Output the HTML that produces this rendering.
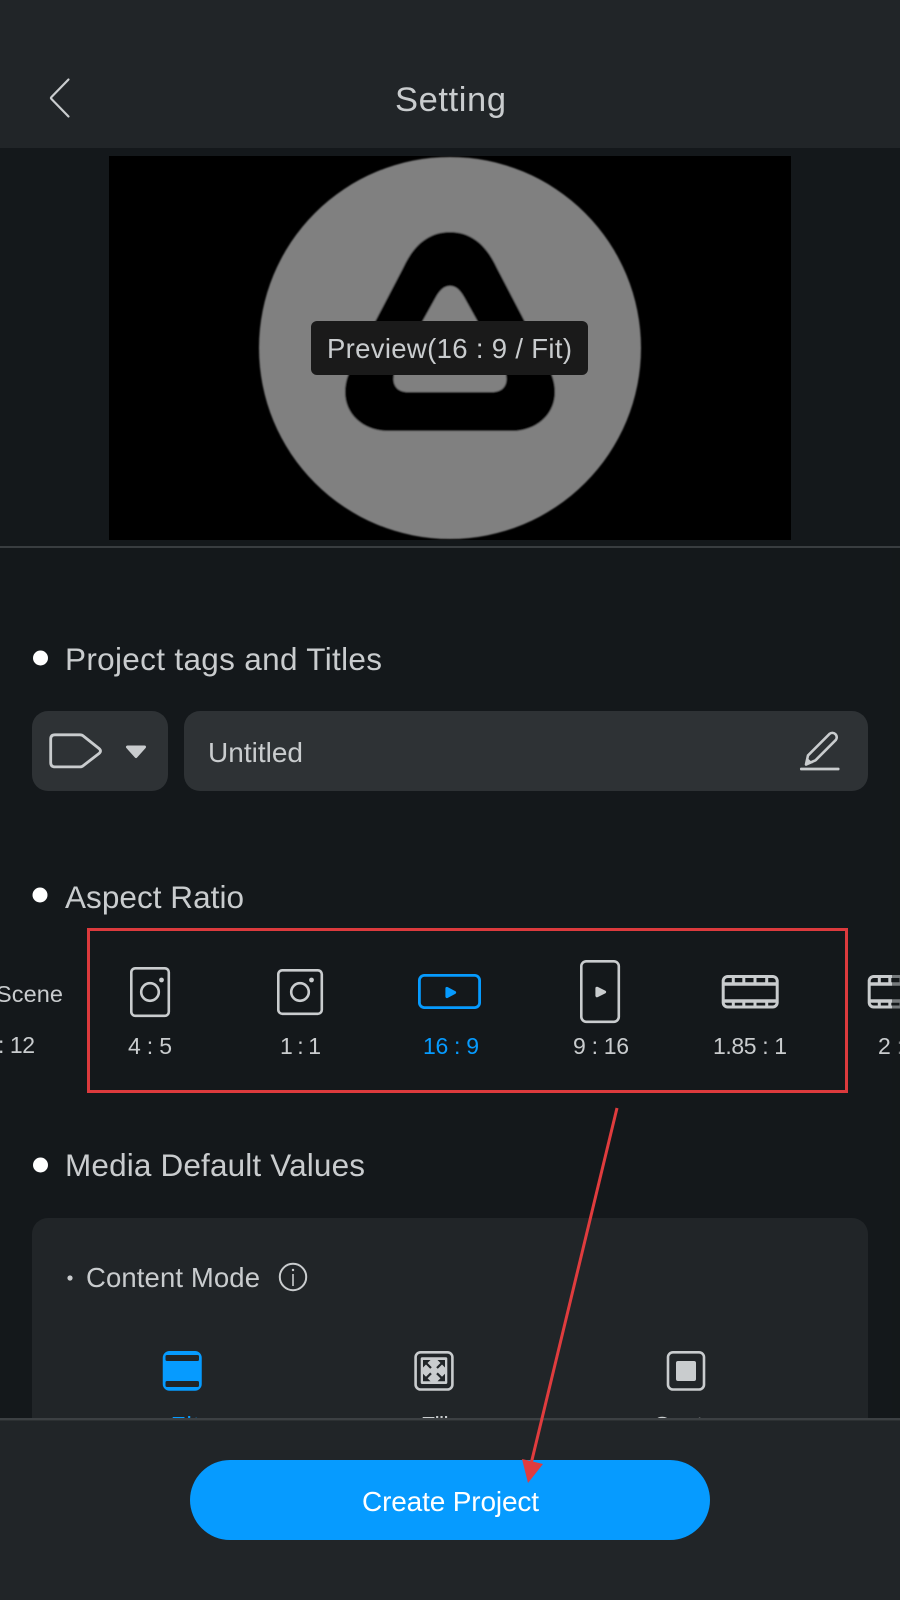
<!DOCTYPE html>
<html lang="en">
<head>
<meta charset="utf-8">
<title>Setting</title>
<style>
html,body{margin:0;padding:0;background:#14181b;width:900px;height:1600px;overflow:hidden}
svg{display:block}
text{font-family:"Liberation Sans",sans-serif;fill:#c9ccce}
</style>
</head>
<body>
<svg width="900" height="1600" viewBox="0 0 900 1600" xmlns="http://www.w3.org/2000/svg">
<defs>
<clipPath id="pv"><rect x="109" y="156" width="682" height="384"/></clipPath>
<filter id="soft" x="-5%" y="-5%" width="110%" height="110%"><feGaussianBlur stdDeviation="0.9"/></filter>
<clipPath id="scroll"><rect x="0" y="0" width="900" height="1418"/></clipPath>
</defs>
<rect width="900" height="1600" fill="#14181b"/>

<!-- header -->
<rect width="900" height="148" fill="#212528"/>
<path d="M68.5 79.5 L51.5 97 Q50.5 98 51.5 99 L68.5 116.5" fill="none" stroke="#c9ccce" stroke-width="2.2" stroke-linecap="round" stroke-linejoin="round"/>
<text x="395" y="111" font-size="34.5" textLength="111">Setting</text>

<!-- preview -->
<rect x="109" y="156" width="682" height="384" fill="#000"/>
<g clip-path="url(#pv)">
<g filter="url(#soft)">
<circle cx="450" cy="348" r="191" fill="#808080"/>
<path fill="#000" fill-rule="evenodd" d="M450 232 C428 232 413 246 403 268 L354 362 C348 374 345 382 345 392 C345 415 364 431 388 431 L512 431 C536 431 555 415 555 392 C555 382 552 374 546 362 L497 268 C487 246 472 232 450 232 Z M450 286 C444 286 440 290 436 297 L396 369 C391 379 393 392 408 392 L492 392 C507 392 509 379 504 369 L464 297 C460 290 456 286 450 286 Z"/>
</g>
</g>
<rect x="311" y="321" width="277" height="54" rx="6" fill="#1a1a1a"/>
<text x="327" y="358" font-size="27.5" textLength="245">Preview(16 : 9 / Fit)</text>
<rect x="0" y="546" width="900" height="2" fill="#393d40"/>

<g clip-path="url(#scroll)">
<!-- project tags -->
<circle cx="40.5" cy="658" r="7.5" fill="#fff"/>
<text x="65" y="670" font-size="31.5" textLength="317">Project tags and Titles</text>
<rect x="32" y="711" width="136" height="80" rx="16" fill="#2e3235"/>
<rect x="184" y="711" width="684" height="80" rx="16" fill="#2e3235"/>
<path d="M55 734.8 H80 Q82 734.8 83.3 736 L99 748.5 Q102 751 99 753.5 L83.3 765.6 Q82 766.9 80 766.9 H55 Q50.7 766.9 50.7 762.5 V739 Q50.7 734.8 55 734.8 Z" fill="none" stroke="#c9ccce" stroke-width="2.8" stroke-linejoin="round"/>
<path d="M127.5 747 H144.5 L136 756.5 Z" fill="#c9ccce" stroke="#c9ccce" stroke-width="3" stroke-linejoin="round"/>
<text x="208" y="762" font-size="28" textLength="95">Untitled</text>
<path d="M806 764.5 L808 755.4 L829.5 733.9 A4.4 4.4 0 0 1 835.7 740.1 L815.5 760.3 Z" fill="none" stroke="#c9ccce" stroke-width="2.6" stroke-linejoin="round"/>
<path d="M806 764.5 L807.2 758.5 L812 762.8 Z" fill="#c9ccce" stroke="#c9ccce" stroke-width="1"/>
<rect x="800" y="767.6" width="39.5" height="2.8" rx="1" fill="#c9ccce"/>

<!-- aspect ratio -->
<circle cx="40" cy="895" r="7.5" fill="#fff"/>
<text x="65" y="908" font-size="31.5" textLength="179">Aspect Ratio</text>

<text x="-4" y="1002" font-size="23.5" textLength="67">Scene</text>
<text x="-2" y="1053" font-size="23" textLength="37">: 12</text>

<!-- 4:5 -->
<rect x="131.3" y="968.3" width="37.5" height="47.5" rx="4" fill="none" stroke="#c9ccce" stroke-width="2.6"/>
<circle cx="150" cy="992" r="8.8" fill="none" stroke="#c9ccce" stroke-width="2.6"/>
<circle cx="161.5" cy="980" r="2.4" fill="#c9ccce"/>
<text x="128" y="1054" font-size="23" textLength="44">4 : 5</text>
<!-- 1:1 -->
<rect x="278.3" y="970.3" width="43.5" height="43.5" rx="4" fill="none" stroke="#c9ccce" stroke-width="2.6"/>
<circle cx="300" cy="992" r="8.8" fill="none" stroke="#c9ccce" stroke-width="2.6"/>
<circle cx="311.5" cy="980" r="2.4" fill="#c9ccce"/>
<text x="280" y="1054" font-size="23" textLength="41">1 : 1</text>
<!-- 16:9 -->
<rect x="419.4" y="975.4" width="60.2" height="32.2" rx="5" fill="none" stroke="#069bff" stroke-width="2.8"/>
<path d="M447 988.5 L454.5 992.5 L447 996.5 Z" fill="#069bff" stroke="#069bff" stroke-width="3.2" stroke-linejoin="round"/>
<text x="423" y="1054" font-size="23" textLength="56" style="fill:#069bff">16 : 9</text>
<!-- 9:16 -->
<rect x="581.3" y="961.3" width="37.5" height="60.5" rx="5" fill="none" stroke="#c9ccce" stroke-width="2.6"/>
<path d="M597 988.3 L604.5 992 L597 995.7 Z" fill="#c9ccce" stroke="#c9ccce" stroke-width="3.2" stroke-linejoin="round"/>
<text x="573" y="1054" font-size="23" textLength="56">9 : 16</text>
<!-- 1.85:1 -->
<g fill="none" stroke="#c9ccce" stroke-width="3">
<rect x="723.2" y="976.5" width="54" height="30.5" rx="4.5"/>
<path d="M723 984 H777.5 M723 1001 H777.5" stroke-width="3.4"/>
<path d="M733.3 977 V984 M743.8 977 V984 M755 977 V984 M766.7 977 V984"/>
<path d="M733.3 1001 V1007 M743.8 1001 V1007 M755 1001 V1007 M766.7 1001 V1007"/>
</g>
<text x="713" y="1054" font-size="23" textLength="74">1.85 : 1</text>
<!-- 2: -->
<g fill="none" stroke="#c9ccce" stroke-width="3">
<rect x="869.2" y="976.5" width="60" height="30.5" rx="4.5"/>
<path d="M869 984 H930 M869 1001 H930" stroke-width="3.4"/>
<path d="M879.3 977 V984 M889.8 977 V984 M901 977 V984 M912.7 977 V984"/>
<path d="M879.3 1001 V1007 M889.8 1001 V1007 M901 1001 V1007 M912.7 1001 V1007"/>
</g>
<text x="878" y="1054" font-size="23" textLength="44">2 : 1</text>

<!-- media default values -->
<circle cx="40.5" cy="1165" r="7.5" fill="#fff"/>
<text x="65" y="1176" font-size="31.5" textLength="300">Media Default Values</text>
<rect x="32" y="1218" width="836" height="300" rx="16" fill="#212528"/>
<circle cx="70" cy="1278" r="2.6" fill="#c9ccce"/>
<text x="86" y="1287" font-size="27.5" textLength="174">Content Mode</text>
<circle cx="293" cy="1277" r="13.2" fill="none" stroke="#c9ccce" stroke-width="2"/>
<path d="M293 1274 V1286" stroke="#c9ccce" stroke-width="1.6"/>
<circle cx="293" cy="1270" r="1.2" fill="#c9ccce"/>

<!-- fit -->
<rect x="164" y="1352.3" width="36.5" height="37.2" rx="5.5" fill="#069bff" stroke="#069bff" stroke-width="2.5"/>
<rect x="165.5" y="1355" width="33.5" height="6" rx="1.5" fill="#212528"/>
<rect x="165.5" y="1381" width="33.5" height="6" rx="1.5" fill="#212528"/>
<text x="170.7" y="1433.5" font-size="24" textLength="29" style="fill:#069bff">Fit</text>
<!-- fill -->
<rect x="415.6" y="1352.3" width="36.8" height="37.2" rx="5" fill="none" stroke="#c9ccce" stroke-width="2.6"/>
<rect x="420.7" y="1357.3" width="26.6" height="26.7" rx="1.5" fill="#c9ccce"/>
<g fill="none" stroke="#212528" stroke-width="2.2">
<path d="M425 1362 L431 1368"/>
<path d="M443 1362 L437 1368"/>
<path d="M425 1379.3 L431 1373.3"/>
<path d="M443 1379.3 L437 1373.3"/>
</g>
<g fill="#212528">
<path d="M423 1360 H430.5 L423 1367.5 Z"/>
<path d="M445 1360 H437.5 L445 1367.5 Z"/>
<path d="M423 1381.3 H430.5 L423 1373.8 Z"/>
<path d="M445 1381.3 H437.5 L445 1373.8 Z"/>
</g>
<text x="420.7" y="1433.5" font-size="24" textLength="28">Fill</text>
<!-- center -->
<rect x="668" y="1352.3" width="36" height="37.2" rx="5" fill="none" stroke="#c9ccce" stroke-width="2.6"/>
<rect x="676" y="1361" width="20" height="20" rx="2" fill="#c9ccce"/>
<text x="653" y="1433.5" font-size="24" textLength="71">Center</text>

<!-- right fade strip -->
<rect x="892" y="548" width="8" height="870" fill="#14181b" fill-opacity="0.45"/>
</g>

<!-- bottom bar -->
<rect x="0" y="1418" width="900" height="182" fill="#212528"/>
<rect x="0" y="1418" width="900" height="2.4" fill="#3c4043"/>
<rect x="190" y="1460" width="520" height="80" rx="40" fill="#069bff"/>
<text x="362" y="1511" font-size="28" textLength="177" style="fill:#fff">Create Project</text>

<!-- annotation -->
<rect x="88.5" y="929.5" width="758" height="162" fill="none" stroke="#dc3a3d" stroke-width="3"/>
<path d="M617 1108 L531 1464" stroke="#e03c3e" stroke-width="3" fill="none"/>
<path d="M528 1483 L522 1459 L543 1464 Z" fill="#e03c3e"/>
</svg>
</body>
</html>
